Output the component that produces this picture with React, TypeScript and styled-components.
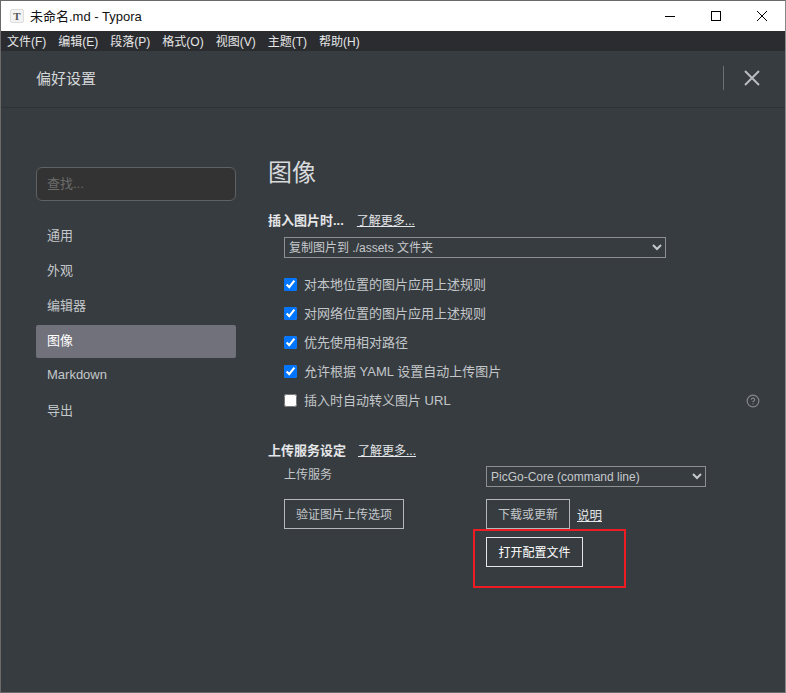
import React from "react";
import styled, { createGlobalStyle } from "styled-components";
import { CircleHelp } from "lucide-react";

const Global = createGlobalStyle`
  html, body { margin: 0; padding: 0; background: #5f5f5f; }
  * { box-sizing: border-box; }
`;

const FONT = `"Liberation Sans", "Noto Sans CJK SC", sans-serif`;

const Win = styled.div`
  position: relative;
  width: 786px;
  height: 693px;
  display: flex;
  flex-direction: column;
  overflow: hidden;
  font-family: ${FONT};
  background: #373c40;
  border-style: solid;
  border-color: #6a6a6a #8a8a8a #6a6a6a #6a6a6a;
  border-width: 1px;
`;
const TitleBar = styled.div`
  height: 30px;
  flex: none;
  display: flex;
  align-items: center;
  background: #fff;
  padding-left: 9px;
  color: #111;
  font-size: 13px;
`;
const AppIcon = styled.span`
  width: 14px;
  height: 14px;
  margin-right: 6px;
  border-radius: 2px;
  border: 1px solid #ddd;
  background: #f3f3f3;
  display: flex;
  align-items: center;
  justify-content: center;
  font: bold 11px "Liberation Serif", serif;
  color: #555;
`;
const TitleText = styled.span`
  flex: 1;
  padding-bottom: 2px;
`;
const WinBtn = styled.span`
  width: 46px;
  height: 30px;
  display: flex;
  align-items: center;
  justify-content: center;
`;
const MenuBar = styled.div`
  height: 20px;
  flex: none;
  display: flex;
  align-items: center;
  background: #2a2c30;
  padding: 0 0 2px 6px;
  gap: 12px;
  color: #e6e6e6;
  font-size: 12px;
`;
const Header = styled.div`
  height: 57px;
  flex: none;
  display: flex;
  align-items: center;
  border-bottom: 1px solid #2f3337;
  padding: 0 0 2px 35px;
  color: #d4d6d8;
  font-size: 15px;
`;
const HeaderTitle = styled.span`
  flex: 1;
  padding-bottom: 2px;
`;
const HeaderDivider = styled.span`
  width: 1px;
  height: 24px;
  background: #6c7073;
`;
const HeaderClose = styled.span`
  width: 61px;
  display: flex;
  justify-content: center;
  padding-right: 5px;
`;
const Body = styled.div`
  flex: 1;
  display: flex;
  padding: 48px 24px 0 35px;
`;
const Side = styled.nav`
  width: 200px;
  flex: none;
  margin-right: 32px;
  padding-top: 11px;
`;
const Search = styled.div`
  height: 34px;
  border: 1px solid #5f6265;
  border-radius: 6px;
  background: #333333;
  color: #6c6c6c;
  font-size: 13px;
  display: flex;
  align-items: center;
  padding: 0 0 3px 10px;
  margin-bottom: 19px;
`;
const NavItem = styled.div<{ $active?: boolean }>`
  height: 33px;
  margin-bottom: 2px;
  display: flex;
  align-items: center;
  padding: 0 0 4px 11px;
  border-radius: 2px;
  font-size: 13px;
  color: ${(p) => (p.$active ? "#ffffff" : "#c3c7ca")};
  background: ${(p) => (p.$active ? "#71717c" : "transparent")};
`;
const Main = styled.main`
  flex: 1;
  min-width: 0;
`;
const Heading = styled.h1`
  margin: 0 0 20px;
  height: 34px;
  line-height: 34px;
  font-size: 24px;
  font-weight: 400;
  color: #d8dadc;
`;
const SectionTitle = styled.div<{ $top?: number; $gap: number }>`
  display: flex;
  align-items: center;
  gap: ${(p) => p.$gap}px;
  height: 18px;
  margin-top: ${(p) => p.$top ?? 0}px;
  font-size: 13px;
  font-weight: 700;
  color: #e4e6e8;
`;
const More = styled.a`
  font-size: 12px;
  font-weight: 400;
  color: #e4e6e8;
  text-decoration: underline;
`;
const Indented = styled.div`
  padding-left: 16px;
`;
const Select = styled.select<{ $w: number; $top?: number }>`
  display: block;
  width: ${(p) => p.$w}px;
  height: 21px;
  margin-top: ${(p) => p.$top ?? 0}px;
  padding: 0;
  color-scheme: dark;
  background: #373c40;
  color: #c6c9cc;
  border: 1px solid #8d8f91;
  border-radius: 0;
  font: 12px ${FONT};
  outline: none;
`;
const Checks = styled.div`
  margin-top: 12px;
`;
const CheckRow = styled.label`
  height: 29px;
  display: flex;
  align-items: center;
  gap: 7px;
  font-size: 13px;
  color: #c3c7ca;
`;
const CheckText = styled.span`
  padding-bottom: 2px;
`;
const Check = styled.input`
  width: 13px;
  height: 13px;
  margin: 0;
  accent-color: #0075ff;
`;
const Help = styled.span`
  margin-left: auto;
  padding-right: 1px;
  display: flex;
  color: #85888b;
`;
const UploadGrid = styled.div`
  display: grid;
  grid-template-columns: 202px 1fr;
  align-items: start;
  padding-left: 16px;
  margin-top: 8px;
`;
const RowLabel = styled.div`
  font-size: 12px;
  color: #c3c7ca;
  height: 21px;
  line-height: 19px;
`;
const ButtonRow = styled.div`
  display: flex;
  align-items: center;
  gap: 7px;
  margin-top: 12px;
`;
const Btn = styled.button<{ $w: number; $focus?: boolean }>`
  width: ${(p) => p.$w}px;
  height: 30px;
  padding: 0 0 2px;
  background: transparent;
  border: 1px solid ${(p) => (p.$focus ? "#e4e6e8" : "#b5b7b9")};
  color: ${(p) => (p.$focus ? "#ffffff" : "#c3c7ca")};
  font: 400 12px ${FONT};
`;
const SecondRow = styled.div`
  margin-top: 8px;
`;
const ExplainLink = styled.a`
  font-size: 12.5px;
  color: #e4e6e8;
  text-decoration: underline;
`;
const Callout = styled.div`
  position: absolute;
  left: 472px;
  top: 528px;
  width: 153px;
  height: 59px;
  border: 2px solid #ed1c24;
  pointer-events: none;
`;

const menus = ["文件(F)", "编辑(E)", "段落(P)", "格式(O)", "视图(V)", "主题(T)", "帮助(H)"];
const nav = ["通用", "外观", "编辑器", "图像", "Markdown", "导出"];
const checks = [
  { t: "对本地位置的图片应用上述规则", c: true },
  { t: "对网络位置的图片应用上述规则", c: true },
  { t: "优先使用相对路径", c: true },
  { t: "允许根据 YAML 设置自动上传图片", c: true },
  { t: "插入时自动转义图片 URL", c: false },
];

export default function App() {
  return (
    <Win>
      <Global />
      <TitleBar>
        <AppIcon>T</AppIcon>
        <TitleText>未命名.md - Typora</TitleText>
        <WinBtn>
          <svg width="10" height="10" viewBox="0 0 10 10"><path d="M0 5.5H10" stroke="#000" /></svg>
        </WinBtn>
        <WinBtn>
          <svg width="10" height="10" viewBox="0 0 10 10"><rect x=".5" y=".5" width="9" height="9" fill="none" stroke="#000" /></svg>
        </WinBtn>
        <WinBtn>
          <svg width="10" height="10" viewBox="0 0 10 10"><path d="M0 0L10 10M10 0L0 10" stroke="#000" /></svg>
        </WinBtn>
      </TitleBar>
      <MenuBar>
        {menus.map((m) => (
          <span key={m}>{m}</span>
        ))}
      </MenuBar>
      <Header>
        <HeaderTitle>偏好设置</HeaderTitle>
        <HeaderDivider />
        <HeaderClose>
          <svg width="16" height="16" viewBox="0 0 16 16"><path d="M1 1L15 15M15 1L1 15" stroke="#b9bcbf" strokeWidth="2" /></svg>
        </HeaderClose>
      </Header>
      <Body>
        <Side>
          <Search>查找...</Search>
          {nav.map((n) => (
            <NavItem key={n} $active={n === "图像"}>{n}</NavItem>
          ))}
        </Side>
        <Main>
          <Heading>图像</Heading>
          <SectionTitle $gap={13}>
            插入图片时...
            <More>了解更多...</More>
          </SectionTitle>
          <Indented>
            <Select $w={382} $top={9} defaultValue="a">
              <option value="a">复制图片到 ./assets 文件夹</option>
            </Select>
            <Checks>
              {checks.map((c) => (
                <CheckRow key={c.t}>
                  <Check type="checkbox" defaultChecked={c.c} />
                  <CheckText>{c.t}</CheckText>
                  {!c.c && (
                    <Help>
                      <CircleHelp size={14} />
                    </Help>
                  )}
                </CheckRow>
              ))}
            </Checks>
          </Indented>
          <SectionTitle $gap={12} $top={25}>
            上传服务设定
            <More>了解更多...</More>
          </SectionTitle>
          <UploadGrid>
            <RowLabel>上传服务</RowLabel>
            <Select $w={220} defaultValue="p">
              <option value="p">PicGo-Core (command line)</option>
            </Select>
            <ButtonRow>
              <Btn $w={120}>验证图片上传选项</Btn>
            </ButtonRow>
            <div>
              <ButtonRow>
                <Btn $w={84}>下载或更新</Btn>
                <ExplainLink>说明</ExplainLink>
              </ButtonRow>
              <SecondRow>
                <Btn $w={97} $focus>打开配置文件</Btn>
              </SecondRow>
            </div>
          </UploadGrid>
        </Main>
      </Body>
      <Callout />
    </Win>
  );
}
